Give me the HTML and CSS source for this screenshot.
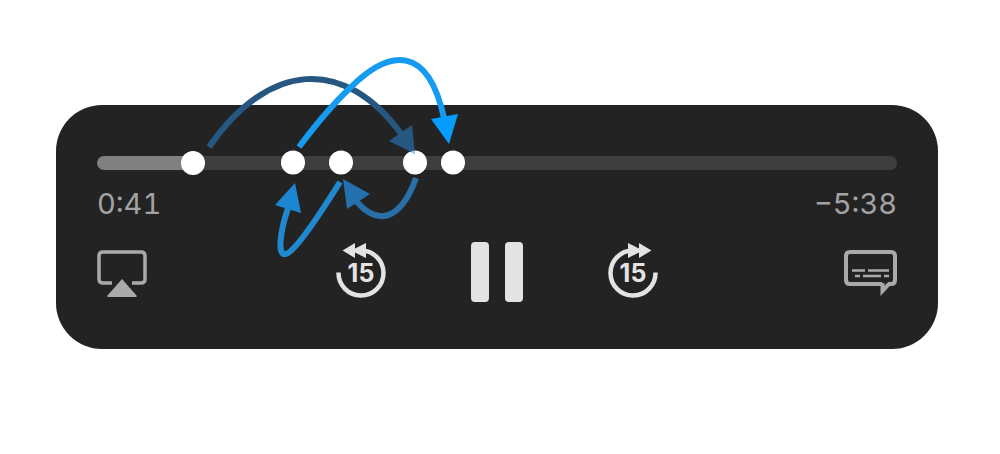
FILE: index.html
```
<!DOCTYPE html>
<html lang="en">
<head>
    <meta charset="UTF-8">
    <title>Player scrubbing</title>
    <link rel="stylesheet" href="styles.css">
</head>
<body>
<div class="player">
    <input class="scrubber" type="range" min="0" max="379" value="41" aria-label="Position">
    <div class="times">
        <span>0:41</span>
        <span>−5:38</span>
    </div>
    <div class="controls">
        <button class="side" type="button" aria-label="AirPlay">
            <svg width="50" height="48" viewBox="0 0 50 48">
                <path d="M15 33H6Q2 33 2 29V6Q2 2 6 2H44Q48 2 48 6V29Q48 33 44 33H35" fill="none" stroke="#aaa" stroke-width="3.500"/>
                <path d="M25 29L39.500 45.500Q40 47 39 47H11Q10 47 10.500 45.500Z" fill="#aaa"/>
            </svg>
        </button>
        <div class="main">
            <button type="button" aria-label="Back 15 seconds">
                <svg width="52" height="60" viewBox="0 0 52 60">
                    <path d="M3.500 30.500A22.500 22.500 0 1 0 26 8.500H23" fill="none" stroke="#e3e3e3" stroke-width="4.500"/>
                    <path d="M7.500 8.500L20 1V6.500L31 1V16L20 10.500V16Z" fill="#e3e3e3"/>
                    <text class="secs" x="26" y="40">15</text>
                </svg>
            </button>
            <button type="button" aria-label="Pause">
                <svg width="52" height="60" viewBox="0 0 52 60">
                    <rect x="0" y="0" width="18" height="60" rx="4" fill="#e3e3e3"/>
                    <rect x="34" y="0" width="18" height="60" rx="4" fill="#e3e3e3"/>
                </svg>
            </button>
            <button type="button" aria-label="Forward 15 seconds">
                <svg width="52" height="60" viewBox="0 0 52 60">
                    <path d="M48.500 30.500A22.500 22.500 0 1 1 26 8.500H29" fill="none" stroke="#e3e3e3" stroke-width="4.500"/>
                    <path d="M44.500 8.500L32 1V6.500L21 1V16L32 10.500V16Z" fill="#e3e3e3"/>
                    <text class="secs" x="26" y="40">15</text>
                </svg>
            </button>
        </div>
        <button class="side right" type="button" aria-label="Subtitles">
            <svg width="53" height="48" viewBox="0 0 53 48">
                <path d="M38 34H6Q2 34 2 30V6Q2 2 6 2H47Q51 2 51 6V30Q51 34 47 34H45L38.500 41V33" fill="none" stroke="#aaa" stroke-width="4"/>
                <path d="M8 20.500H21M24 20.500H45M11 26H16M19 26H37M40 26H45" fill="none" stroke="#aaa" stroke-width="2.500"/>
            </svg>
        </button>
    </div>

    <!-- jumps between the scrub positions, oldest is darkest -->
    <svg class="jumps" viewBox="56 45 882 220" aria-hidden="true">
        <g fill="#fff">
            <circle cx="293" cy="162.500" r="12"/>
            <circle cx="341" cy="162.500" r="12"/>
            <circle cx="415" cy="162.500" r="12"/>
            <circle cx="453" cy="162.500" r="12"/>
        </g>
        <g fill="none" stroke-width="6">
            <path d="M209 147C268 62 344 55 402 135" stroke="#265780"/>
            <path d="M416 178C402 217 380 228 357 202" stroke="#2a70a8"/>
            <path d="M340 182C320 214 298 247 288 253C276 260 280 232 288 208" stroke="#2088cf"/>
            <path d="M299 147C317 123 333 104 350 88C390 48 428 45 444 118" stroke="#159bf0"/>
        </g>
        <path d="M412 125L389 141L415 154Z" fill="#265780"/>
        <path d="M411 151.500L415 155L414.500 150.500Z" fill="#a9d3f5"/>
        <path d="M343 179L370 194L347 209Z" fill="#2471b0"/>
        <path d="M295 183L301 213L275 205Z" fill="#1c86d2"/>
        <path d="M431 119L458 114L449 144Z" fill="#069dff"/>
    </svg>
</div>
</body>
</html>
```
FILE: styles.css
```
body {margin: 0; padding: 105px 62px 0 56px; background: #fff;
    font-family: Inter, "Liberation Sans", sans-serif;}
.player {position: relative; padding: 46px 41px 47px; border-radius: 46px; background: #232323;}

.scrubber {-webkit-appearance: none; appearance: none; display: block; width: 100%; height: 24px;
    margin: 0; background: none;}
.scrubber::-webkit-slider-runnable-track {height: 14px; border-radius: 7px;
    background: linear-gradient(to right, #808080 12%, #3e3e3e 12%);}
.scrubber::-webkit-slider-thumb {-webkit-appearance: none; width: 24px; height: 24px;
    margin-top: -5px; border-radius: 50%; background: #fff;}

.times {display: flex; justify-content: space-between; margin-top: 13px;
    font-size: 29px; line-height: 32px; font-variant-numeric: tabular-nums; color: #a3a3a3;}

.controls {display: grid; grid-template-columns: 1fr auto 1fr; margin-top: 22px;}
.controls button {padding: 0; border: 0; background: none;}
.controls svg {display: block;}
.main {display: flex; gap: 84px;}
.side {justify-self: start; align-self: center; padding-top: 2px;}
.controls .side {padding-top: 3px;}
.right {justify-self: end;}
.secs {font-family: Inter, "Liberation Sans", sans-serif; font-size: 25px; font-weight: 700;
    text-anchor: middle; fill: #e3e3e3;}

.jumps {position: absolute; left: 0; top: -60px; width: 100%; pointer-events: none;}
```
